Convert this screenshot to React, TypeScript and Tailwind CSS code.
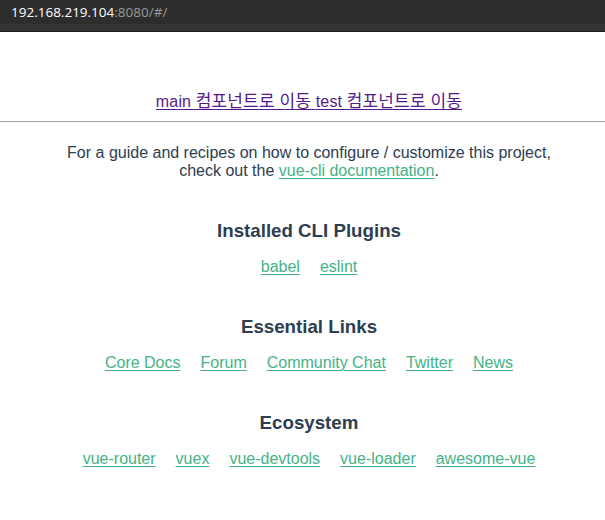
import React from "react";

const sans = { fontFamily: '"Liberation Sans", Arial, "Noto Sans CJK KR", sans-serif' };

function Links({ items }: { items: string[] }) {
  return (
    <ul className="mt-4 flex justify-center gap-5 leading-[18px]">
      {items.map((t) => (
        <li key={t}>
          <a href="#" className="text-[#45b386] underline decoration-1 underline-offset-2">
            {t}
          </a>
        </li>
      ))}
    </ul>
  );
}

export default function App() {
  return (
    <div className="w-[605px] h-[520px] overflow-hidden bg-white" style={sans}>
      <div className="h-[32px] bg-[#2d2d2d] flex flex-col">
        <div className="h-[24px] flex items-center pl-[11px] pt-[1px] text-[13.5px]" style={{ fontFamily: '"Open Sans", "Liberation Sans", sans-serif' }}>
          <span className="text-white">192.168.219.104</span>
          <span className="text-[#9a9a9a]">:8080/#/</span>
        </div>
        <div className="flex-1 bg-[#353535] border-b border-[#1f1f1f]" />
      </div>
      <div className="w-[618px] text-[16px] text-[#2c3e50] text-center antialiased">
        <div className="pt-[61px] leading-[18px] h-[79px] tracking-[0.15px]">
          <a href="#" className="text-[#551a8b] underline decoration-1 underline-offset-2">
            main <span className="text-[17px]">컴포넌트로 이동</span>{" "}
          </a>
          <a href="#" className="text-[#551a8b] underline decoration-1 underline-offset-2">
            test <span className="text-[17px]">컴포넌트로 이동</span>
          </a>
        </div>
        <div className="mt-[10px] border-t border-[#a0a0a0] h-[1px] bg-[#eeeeee]" />
        <p className="mt-[22px] leading-[18px]">
          For a guide and recipes on how to configure / customize this project,
          <br />
          check out the{" "}
          <a href="#" className="text-[#45b386] underline decoration-1 underline-offset-2">vue-cli documentation</a>.
        </p>
        <h3 className="mt-10 text-[18.72px] font-bold leading-[21.5px]">Installed CLI Plugins</h3>
        <Links items={["babel", "eslint"]} />
        <h3 className="mt-10 text-[18.72px] font-bold leading-[22px]">Essential Links</h3>
        <Links items={["Core Docs", "Forum", "Community Chat", "Twitter", "News"]} />
        <h3 className="mt-10 text-[18.72px] font-bold leading-[22px]">Ecosystem</h3>
        <Links items={["vue-router", "vuex", "vue-devtools", "vue-loader", "awesome-vue"]} />
      </div>
    </div>
  );
}
